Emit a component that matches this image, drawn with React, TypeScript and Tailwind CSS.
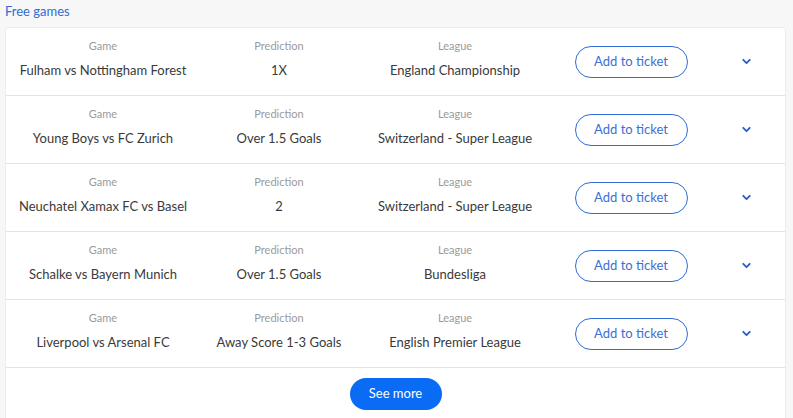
import { ChevronDown } from "lucide-react";

const games = [
  { game: "Fulham vs Nottingham Forest", prediction: "1X", league: "England Championship" },
  { game: "Young Boys vs FC Zurich", prediction: "Over 1.5 Goals", league: "Switzerland - Super League" },
  { game: "Neuchatel Xamax FC vs Basel", prediction: "2", league: "Switzerland - Super League" },
  { game: "Schalke vs Bayern Munich", prediction: "Over 1.5 Goals", league: "Bundesliga" },
  { game: "Liverpool vs Arsenal FC", prediction: "Away Score 1-3 Goals", league: "English Premier League" },
];

function Cell({ label, value }: { label: string; value: string }) {
  return (
    <div className="flex flex-col items-center self-start pt-[11px] text-center">
      <span className="text-[11px] leading-[14px] text-[#9a9a9a]">{label}</span>
      <span className="mt-[9px] text-[13px] leading-[16px] text-[#3a3a3a]">{value}</span>
    </div>
  );
}

export default function App() {
  return (
    <div className="h-[418px] w-[793px] overflow-hidden bg-[#f7f7f7] font-['Lato',sans-serif]">
      <div className="px-[5px] pt-[3px]">
        <p className="h-[24px] text-[13px] leading-[16px] text-[#2f6cd6]">Free games</p>
        <div className="mr-[2px] rounded-[3px] border border-[#ececec] bg-white">
          {games.map((g) => (
            <div
              key={g.game}
              className="grid h-[68px] grid-cols-[176px_176px_176px_176px_1fr] items-center border-b border-[#e4e4e4] pl-[9px] pr-[12px]"
            >
              <Cell label="Game" value={g.game} />
              <Cell label="Prediction" value={g.prediction} />
              <Cell label="League" value={g.league} />
              <div className="flex justify-center">
                <button className="h-[32px] w-[113px] rounded-full border border-[#2f6cd6] text-[13px] text-[#3b6fd4]">
                  Add to ticket
                </button>
              </div>
              <div className="flex justify-center">
                <ChevronDown className="h-[13px] w-[13px] text-[#2f5fc9]" strokeWidth={3.5} />
              </div>
            </div>
          ))}
          <div className="flex justify-center pt-[10px] pb-[10px]">
            <button className="h-[32px] w-[92px] rounded-full bg-[#0a6cf5] text-[13px] text-white">
              See more
            </button>
          </div>
        </div>
      </div>
    </div>
  );
}
